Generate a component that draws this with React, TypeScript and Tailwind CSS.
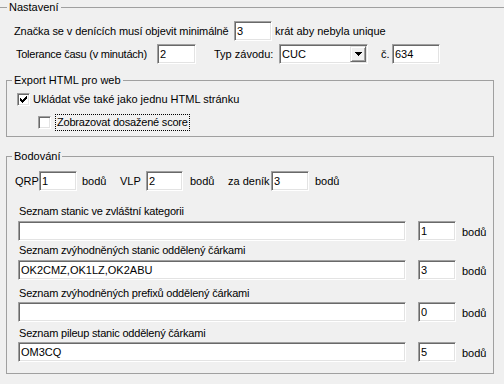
import React from "react";

const sunken =
  "border border-t-[#a0a0a0] border-l-[#a0a0a0] border-r-white border-b-white shadow-[inset_1px_1px_0_#696969,inset_-1px_-1px_0_#e3e3e3] bg-white";

function Field({ className = "", children }: { className?: string; children?: React.ReactNode }) {
  return (
    <div className={`h-[20px] shrink-0 ${sunken} flex items-center pl-[2px] whitespace-nowrap overflow-hidden ${className}`}>
      {children}
    </div>
  );
}

function Check({ checked }: { checked?: boolean }) {
  return (
    <div className={`w-[13px] h-[13px] shrink-0 ${sunken}`}>
      {checked && (
        <svg width="11" height="11" viewBox="0 0 11 11" className="block" shapeRendering="crispEdges">
          <rect x="2" y="4" width="1" height="3" fill="#000" />
          <rect x="3" y="5" width="1" height="3" fill="#000" />
          <rect x="4" y="6" width="1" height="3" fill="#000" />
          <rect x="5" y="5" width="1" height="3" fill="#000" />
          <rect x="6" y="4" width="1" height="3" fill="#000" />
          <rect x="7" y="3" width="1" height="3" fill="#000" />
          <rect x="8" y="2" width="1" height="3" fill="#000" />
        </svg>
      )}
    </div>
  );
}

function ListRow({
  label,
  value,
  points,
  labelMt,
  inputMt,
}: {
  label: string;
  value: string;
  points: string;
  labelMt: string;
  inputMt: string;
}) {
  return (
    <div>
      <div className={`pl-[1px] h-[13px] whitespace-nowrap tracking-[-0.2px] ${labelMt}`}>{label}</div>
      <div className={`flex items-center ${inputMt}`}>
        <Field className="w-[388px]">{value}</Field>
        <Field className="w-[38px] ml-[12px]">{points}</Field>
        <span className="ml-[6px] mt-[3px]">bodů</span>
      </div>
    </div>
  );
}

export default function App() {
  return (
    <div className="w-[504px] h-[384px] bg-[#f0f0f0] overflow-hidden text-[11px] leading-[13px] text-black font-['Liberation_Sans',Arial,sans-serif]">
      <fieldset className="mt-[1px] border-t border-[#a0a0a0]">
        <legend className="ml-[7px] px-[2px]">Nastavení</legend>
        <div className="flex items-center mt-[7px] pl-[14px]">
          <span className="w-[220px] shrink-0 whitespace-nowrap tracking-[-0.1px]">Značka se v denících musí objevit minimálně</span>
          <Field className="w-[38px]">3</Field>
          <span className="ml-[3px] whitespace-nowrap">krát aby nebyla unique</span>
        </div>
        <div className="flex items-center mt-[3px] pl-[16px]">
          <span className="w-[141px] shrink-0 whitespace-nowrap tracking-[-0.25px]">Tolerance času (v minutách)</span>
          <Field className="w-[39px]">2</Field>
          <span className="ml-[18px] w-[65px] shrink-0 whitespace-nowrap">Typ závodu:</span>
          <div className={`w-[89px] h-[20px] shrink-0 ${sunken} flex items-center`}>
            <span className="flex-1 pl-[2px]">CUC</span>
            <div className="w-[16px] h-[16px] mr-[1px] bg-[#f0f0f0] border border-t-[#e3e3e3] border-l-[#e3e3e3] border-r-[#696969] border-b-[#696969] shadow-[inset_1px_1px_0_#fff,inset_-1px_-1px_0_#a0a0a0] flex items-center justify-center">
              <svg width="7" height="4" viewBox="0 0 7 4" shapeRendering="crispEdges" className="block">
                <path d="M0 0H7V1H6V2H5V3H4V4H3V3H2V2H1V1H0Z" fill="#000" />
              </svg>
            </div>
          </div>
          <span className="ml-[13px] w-[11px] shrink-0">č.</span>
          <Field className="w-[48px]">634</Field>
        </div>
        <fieldset className="ml-[6px] w-[488px] mt-[10px] h-[63px] border border-[#a0a0a0]">
          <legend className="ml-[5px] px-[2px]">Export HTML pro web</legend>
          <div className="flex items-center h-[13px] mt-[6px] pl-[10px]">
            <Check checked />
            <span className="ml-[3px] whitespace-nowrap">Ukládat vše také jako jednu HTML stránku</span>
          </div>
          <div className="flex items-center h-[17px] mt-[8px] pl-[31px]">
            <Check />
            <span className="ml-[4px] h-[17px] flex items-center px-[1px] border border-dotted border-black whitespace-nowrap tracking-[-0.2px]">
              Zobrazovat dosažené score
            </span>
          </div>
        </fieldset>
      </fieldset>
      <fieldset className="ml-[6px] w-[488px] mt-[13px] h-[224px] border border-[#a0a0a0]">
        <legend className="ml-[5px] px-[2px]">Bodování</legend>
        <div className="flex items-center mt-[8px] pl-[8px]">
          <span className="w-[24px] shrink-0">QRP</span>
          <Field className="w-[38px]">1</Field>
          <span className="ml-[5px] w-[38px] shrink-0">bodů</span>
          <span className="w-[26px] shrink-0">VLP</span>
          <Field className="w-[37px]">2</Field>
          <span className="ml-[7px] w-[38px] shrink-0">bodů</span>
          <span className="w-[43px] shrink-0 whitespace-nowrap">za deník</span>
          <Field className="w-[38px]">3</Field>
          <span className="ml-[6px]">bodů</span>
        </div>
        <div className="pl-[11px]">
          <ListRow label="Seznam stanic ve zvláštní kategorii" value="" points="1" labelMt="mt-[14px]" inputMt="mt-[3px]" />
          <ListRow
            label="Seznam zvýhodněných stanic oddělený čárkami"
            value="OK2CMZ,OK1LZ,OK2ABU"
            points="3"
            labelMt="mt-[3px]"
            inputMt="mt-[3px]"
          />
          <ListRow
            label="Seznam zvýhodněných prefixů oddělený čárkami"
            value=""
            points="0"
            labelMt="mt-[7px]"
            inputMt="mt-[2px]"
          />
          <ListRow
            label="Seznam pileup stanic oddělený čárkami"
            value="OM3CQ"
            points="5"
            labelMt="mt-[5px]"
            inputMt="mt-[2px]"
          />
        </div>
      </fieldset>
    </div>
  );
}
